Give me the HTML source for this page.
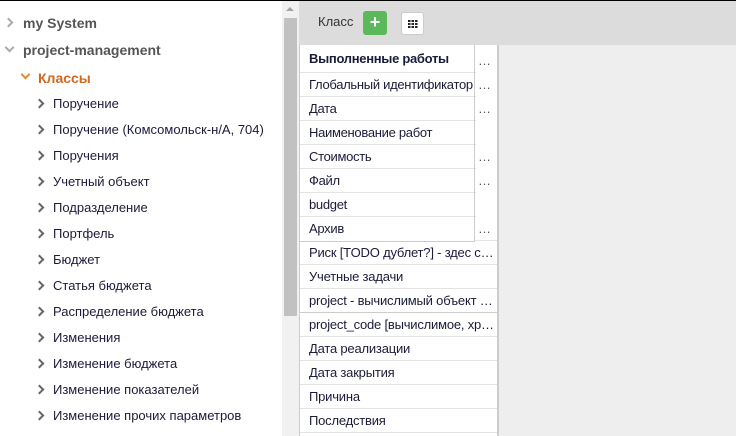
<!DOCTYPE html>
<html><head><meta charset="utf-8"><style>
*{margin:0;padding:0;box-sizing:border-box}
html,body{width:736px;height:436px;overflow:hidden}
body{background:#eee;font-family:"Liberation Sans",Arial,sans-serif;font-size:13px;color:#1b1b3a;position:relative}
.top{position:absolute;left:0;top:0;width:736px;height:1px;background:#000}
.left{position:absolute;left:0;top:1px;width:282px;height:435px;background:#fff}
.sb{position:absolute;left:282px;top:1px;width:17px;height:435px;background:#f1f1f1}
.thumb{position:absolute;left:2px;top:17px;width:13px;height:298px;background:#c1c1c1}
.arr{position:absolute;left:4px;top:6px;width:0;height:0;border-left:4px solid transparent;border-right:4px solid transparent;border-bottom:4px solid #a3a3a3}
.it{position:absolute;white-space:nowrap;line-height:16px}
.chev{position:absolute;width:7px;height:7px;border-right:2px solid #666;border-top:2px solid #666;transform:rotate(45deg)}
.chd{transform:rotate(135deg)}
.tb{position:absolute;left:299px;top:1px;width:437px;height:44px;background:#dcdcdc}
.list{position:absolute;left:299px;top:45px;width:200px;height:391px;background:#fff;border-right:2px solid #ccc;border-left:1px solid #ccc;overflow:hidden}
.row{position:absolute;left:0;width:176px;height:24px;border-top:1px solid #e3e3e3;padding:4px 0 0 9px;white-space:nowrap;overflow:hidden;color:#1b1b3a;letter-spacing:-0.2px}
.wide{width:198px;text-overflow:ellipsis}
.pop{position:absolute;left:299px;top:45px;width:176px;height:197px;background:#fff;border:1px solid #ccc;border-top:none}
.pr{position:absolute;left:0;width:174px;height:24px;border-top:1px solid #e3e3e3;padding:4px 0 0 9px;white-space:nowrap;overflow:hidden;letter-spacing:-0.3px}
.dots{position:absolute;left:178px;color:#555}
</style></head><body>
<div class="top"></div>
<div class="left">
<div class="chev" style="left:5px;top:18px;border-color:#aaa"></div><div class="it" style="left:23px;top:14px;font-weight:bold;color:#555;font-size:14px">my System</div>
<div class="chev chd" style="left:6px;top:43px;border-color:#aaa"></div><div class="it" style="left:23px;top:41px;font-weight:bold;color:#555;font-size:14px">project-management</div>
<div class="chev chd" style="left:22px;top:70px;border-color:#e08a3c"></div><div class="it" style="left:38px;top:69px;font-weight:bold;color:#d2691e;font-size:14px">Классы</div>
</div>
<div class="sb"><div class="arr"></div><div class="thumb"></div></div>
<div class="tb">
<div style="position:absolute;left:19px;top:13px;color:#333">Класс</div>
<div style="position:absolute;left:64px;top:10px;width:24px;height:24px;background:#5cb85c;border-radius:3px;color:#fff;font-weight:bold;font-size:18px;line-height:23px;text-align:center">+</div>
<div style="position:absolute;left:102px;top:11px;width:23px;height:23px;background:#fff;border:1px solid #ccc;border-radius:3px">
<svg width="21" height="21" style="position:absolute;left:0;top:0"><g fill="#222"><rect x="6" y="7" width="2.5" height="2"/><rect x="9.5" y="7" width="2.5" height="2"/><rect x="13" y="7" width="2.5" height="2"/><rect x="6" y="10" width="2.5" height="2"/><rect x="9.5" y="10" width="2.5" height="2"/><rect x="13" y="10" width="2.5" height="2"/><rect x="6" y="13" width="2.5" height="2"/><rect x="9.5" y="13" width="2.5" height="2"/><rect x="13" y="13" width="2.5" height="2"/></g></svg></div>
</div>
<div class="list">
<div class="row" style="top:27px"></div>
<div class="row" style="top:51px"></div>
<div class="row" style="top:75px"></div>
<div class="row" style="top:99px"></div>
<div class="row" style="top:123px"></div>
<div class="row" style="top:147px"></div>
<div class="row" style="top:171px"></div>
<div class="row wide" style="top:195px">Риск [TODO дублет?] - здес сс…</div>
<div class="row wide" style="top:219px">Учетные задачи</div>
<div class="row wide" style="top:243px">project - вычислимый объект с…</div>
<div class="row wide" style="top:267px;border-top:1px solid #ccc">project_code [вычислимое, хр…</div>
<div class="row wide" style="top:291px">Дата реализации</div>
<div class="row wide" style="top:315px">Дата закрытия</div>
<div class="row wide" style="top:339px">Причина</div>
<div class="row wide" style="top:363px">Последствия</div>
<div class="row wide" style="top:387px"></div>
<div class="dots" style="top:8px">…</div>
<div class="dots" style="top:32px">…</div>
<div class="dots" style="top:56px">…</div>
<div class="dots" style="top:104px">…</div>
<div class="dots" style="top:128px">…</div>
<div class="dots" style="top:176px">…</div>
</div>
<div class="pop">
<div class="pr" style="top:0;border-top:none;font-weight:bold;padding-top:6px">Выполненные работы</div>
<div class="pr" style="top:27px">Глобальный идентификатор</div>
<div class="pr" style="top:51px">Дата</div>
<div class="pr" style="top:75px">Наименование работ</div>
<div class="pr" style="top:99px">Стоимость</div>
<div class="pr" style="top:123px">Файл</div>
<div class="pr" style="top:147px">budget</div>
<div class="pr" style="top:171px">Архив</div>
</div>
<div style="position:absolute;left:0;top:0">
<div class="chev" style="left:36px;top:100px"></div><div class="it" style="left:53px;top:96px">Поручение</div>
<div class="chev" style="left:36px;top:126px"></div><div class="it" style="left:53px;top:122px">Поручение (Комсомольск-н/А, 704)</div>
<div class="chev" style="left:36px;top:152px"></div><div class="it" style="left:53px;top:148px">Поручения</div>
<div class="chev" style="left:36px;top:178px"></div><div class="it" style="left:53px;top:174px">Учетный объект</div>
<div class="chev" style="left:36px;top:204px"></div><div class="it" style="left:53px;top:200px">Подразделение</div>
<div class="chev" style="left:36px;top:230px"></div><div class="it" style="left:53px;top:226px">Портфель</div>
<div class="chev" style="left:36px;top:256px"></div><div class="it" style="left:53px;top:252px">Бюджет</div>
<div class="chev" style="left:36px;top:282px"></div><div class="it" style="left:53px;top:278px">Статья бюджета</div>
<div class="chev" style="left:36px;top:308px"></div><div class="it" style="left:53px;top:304px">Распределение бюджета</div>
<div class="chev" style="left:36px;top:334px"></div><div class="it" style="left:53px;top:330px">Изменения</div>
<div class="chev" style="left:36px;top:360px"></div><div class="it" style="left:53px;top:356px">Изменение бюджета</div>
<div class="chev" style="left:36px;top:386px"></div><div class="it" style="left:53px;top:382px">Изменение показателей</div>
<div class="chev" style="left:36px;top:412px"></div><div class="it" style="left:53px;top:408px">Изменение прочих параметров</div>
</div>
</body></html>
